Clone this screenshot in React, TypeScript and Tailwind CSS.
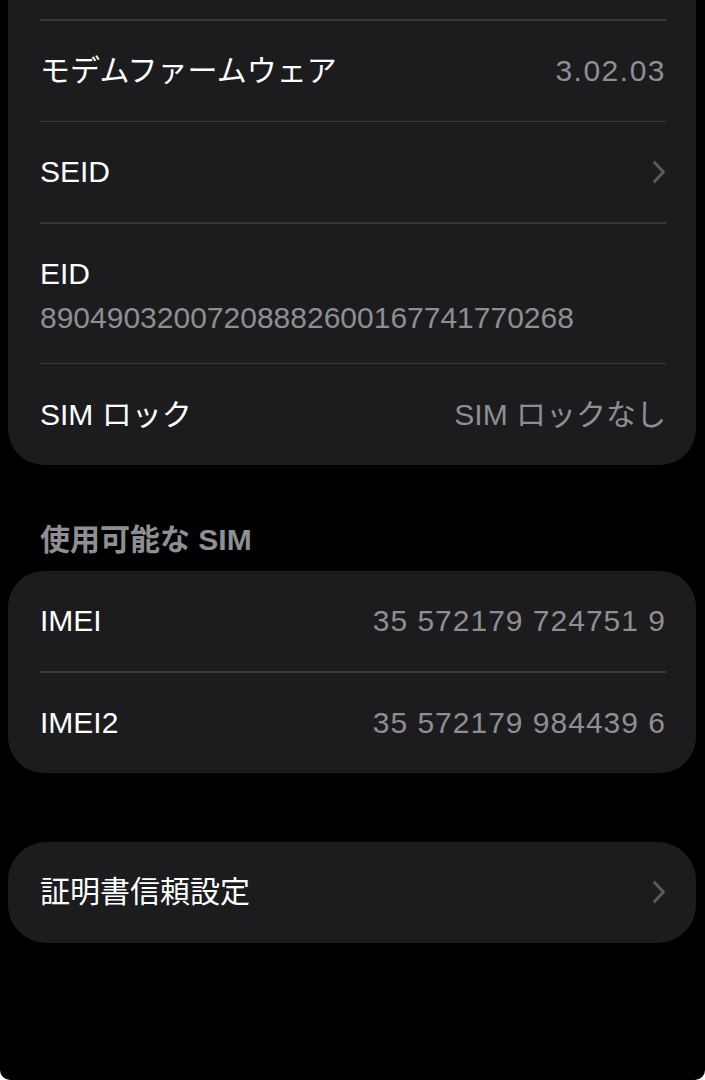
import type { ReactNode } from "react";

const FONT = "font-['Liberation_Sans','Noto_Sans_CJK_JP',sans-serif]";

function Chevron() {
  return (
    <svg width="14" height="24" viewBox="0 0 14 24" fill="none" aria-hidden="true">
      <path d="M2.5 2.5 L11.5 12 L2.5 21.5" stroke="#5c5c60" strokeWidth="2.8" strokeLinecap="round" strokeLinejoin="round" />
    </svg>
  );
}

function Separator() {
  return <div className="h-[1.5px] bg-[#38383b]" />;
}

function Row({ label, value, chevron, h = "h-[101px]" }: { label: string; value?: ReactNode; chevron?: boolean; h?: string }) {
  return (
    <div className={`flex items-center justify-between ${h}`}>
      <span className="text-white">{label}</span>
      {value && <span className="text-[#8e8e93]">{value}</span>}
      {chevron && <Chevron />}
    </div>
  );
}

export default function App() {
  return (
    <div className={`h-[1080px] w-[705px] bg-white ${FONT}`}>
      <div className="flex h-full flex-col overflow-hidden rounded-b-[10px] bg-black pl-[8px] pr-[9px] text-[30px] leading-[36px]">
        {/* device info card (continues above the viewport) */}
        <div className="rounded-b-[36px] bg-[#1c1c1e] pl-[32px] pr-[30px]">
          <div className="h-[19px]" />
          <Separator />
          <Row label="モデムファームウェア" value={<span className="tracking-[1.5px]">3.02.03</span>} h="h-[100px]" />
          <Separator />
          <Row label="SEID" chevron h="h-[100px]" />
          <Separator />
          <div className="flex h-[139px] flex-col gap-[8px] pt-[32px]">
            <span className="text-white">EID</span>
            <span className="text-[#8e8e93]">89049032007208882600167741770268</span>
          </div>
          <Separator />
          <Row label="SIM ロック" value="SIM ロックなし" />
        </div>

        <div className="pb-[13px] pl-[32px] pt-[57px] font-semibold text-[#8e8e93]">使用可能な SIM</div>

        <div className="rounded-[36px] bg-[#1c1c1e] pl-[32px] pr-[30px]">
          <Row label="IMEI" value={<span className="tracking-[1px]">35 572179 724751 9</span>} h="h-[100px]" />
          <Separator />
          <Row label="IMEI2" value={<span className="tracking-[1px]">35 572179 984439 6</span>} h="h-[100px]" />
        </div>

        <div className="mt-[69px] rounded-[38px] bg-[#1c1c1e] pl-[32px] pr-[30px]">
          <Row label="証明書信頼設定" chevron />
        </div>
      </div>
    </div>
  );
}
